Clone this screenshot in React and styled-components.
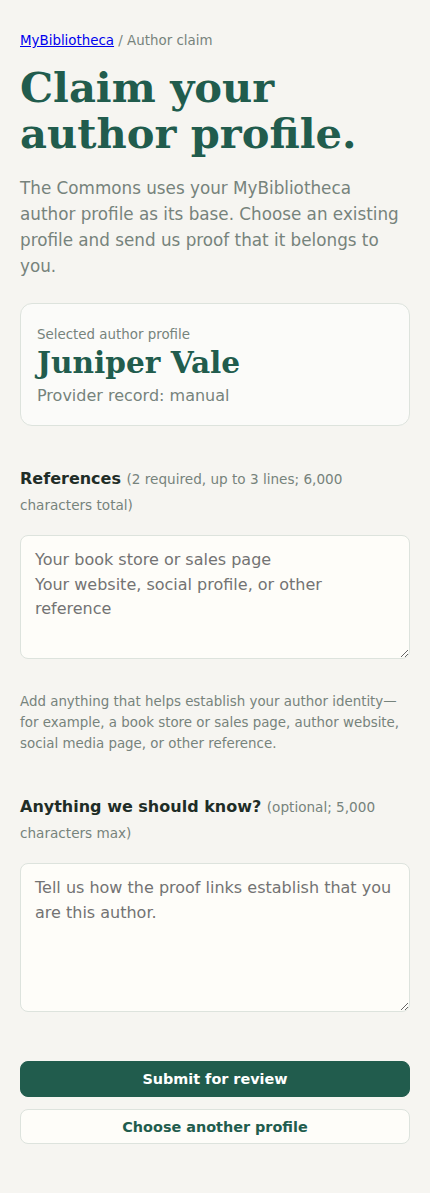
import React from "react";
import styled, { createGlobalStyle } from "styled-components";

const GlobalStyle = createGlobalStyle`
  html, body {
    margin: 0;
    padding: 0;
    background: #f6f5f1;
  }
  body {
    font-family: "DejaVu Sans", "Liberation Sans", sans-serif;
    color: #1f2d27;
  }
  * { box-sizing: border-box; }
`;

const Page = styled.main`
  padding: 30px 20px 48px;
  display: flex;
  flex-direction: column;
`;

const Breadcrumb = styled.nav`
  font-size: 13.4px;
  line-height: 21px;
  color: #76837c;

  a {
    color: #0000ee;
    text-decoration: underline;
  }
`;

const Title = styled.h1`
  font-family: "DejaVu Serif", "Liberation Serif", serif;
  font-weight: 700;
  font-size: 41.6px;
  line-height: 46px;
  color: #215c4d;
  margin: 14px 0 0;
`;

const Lead = styled.p`
  font-size: 16.8px;
  line-height: 26px;
  color: #76837c;
  margin: 18px 0 0;
`;

const ProfileCard = styled.section`
  margin-top: 24px;
  background: #fbfbf9;
  border: 1px solid #dde3dd;
  border-radius: 12px;
  padding: 21px 16px 17px;
`;

const CardLabel = styled.div`
  font-size: 13.4px;
  line-height: 20px;
  color: #76837c;
`;

const AuthorName = styled.div`
  font-family: "DejaVu Serif", "Liberation Serif", serif;
  font-weight: 700;
  font-size: 29.6px;
  line-height: 36px;
  color: #215c4d;
`;

const CardMeta = styled.div`
  font-size: 16px;
  line-height: 24px;
  margin-top: 3px;
  color: #76837c;
`;

const Field = styled.div`
  margin-top: ${(p) => p.$gap || 40}px;
  display: flex;
  flex-direction: column;
`;

const Label = styled.label`
  font-size: 16px;
  line-height: 25px;
  font-weight: 700;
  color: #1f2d27;

  span {
    font-size: 13.6px;
    font-weight: 400;
    color: #76837c;
  }
`;

const TextArea = styled.textarea`
  margin-top: 17px;
  width: 100%;
  height: ${(p) => p.$height}px;
  font-family: "DejaVu Sans", "Liberation Sans", sans-serif;
  font-size: 16px;
  line-height: 24.5px;
  color: #1f2d27;
  background: #fefdf9;
  border: 1px solid #dde3dd;
  border-radius: 8px;
  padding: 12px 14px;
  resize: vertical;

  &::placeholder {
    color: #737373;
  }
`;

const Help = styled.p`
  font-size: 13.4px;
  line-height: 21px;
  color: #76837c;
  margin: 32px 0 0;
`;

const Actions = styled.div`
  margin-top: 49px;
  display: flex;
  flex-direction: column;
  gap: 12px;
`;

const Button = styled.button`
  width: 100%;
  height: ${(p) => (p.$primary ? 36 : 35)}px;
  border-radius: 8px;
  font-family: "DejaVu Sans", "Liberation Sans", sans-serif;
  font-size: 14.4px;
  font-weight: 700;
  cursor: pointer;
  background: ${(p) => (p.$primary ? "#215c4d" : "#fefdf9")};
  color: ${(p) => (p.$primary ? "#ffffff" : "#215c4d")};
  border: 1px solid ${(p) => (p.$primary ? "#215c4d" : "#dde3dd")};
`;

export default function App() {
  return (
    <>
      <GlobalStyle />
      <Page>
        <Breadcrumb>
          <a href="#">MyBibliotheca</a> / Author claim
        </Breadcrumb>
        <Title>Claim your author profile.</Title>
        <Lead>
          The Commons uses your MyBibliotheca author profile as its base. Choose an
          existing profile and send us proof that it belongs to you.
        </Lead>

        <ProfileCard>
          <CardLabel>Selected author profile</CardLabel>
          <AuthorName>Juniper Vale</AuthorName>
          <CardMeta>Provider record: manual</CardMeta>
        </ProfileCard>

        <Field $gap={40}>
          <Label htmlFor="refs">
            References <span>(2 required, up to 3 lines; 6,000 characters total)</span>
          </Label>
          <TextArea
            id="refs"
            $height={124}
            placeholder={"Your book store or sales page\nYour website, social profile, or other reference"}
          />
          <Help>
            Add anything that helps establish your author identity—for example, a
            book store or sales page, author website, social media page, or other
            reference.
          </Help>
        </Field>

        <Field $gap={40}>
          <Label htmlFor="notes">
            Anything we should know? <span>(optional; 5,000 characters max)</span>
          </Label>
          <TextArea
            id="notes"
            $height={149}
            placeholder="Tell us how the proof links establish that you are this author."
          />
        </Field>

        <Actions>
          <Button $primary type="submit">Submit for review</Button>
          <Button type="button">Choose another profile</Button>
        </Actions>
      </Page>
    </>
  );
}
